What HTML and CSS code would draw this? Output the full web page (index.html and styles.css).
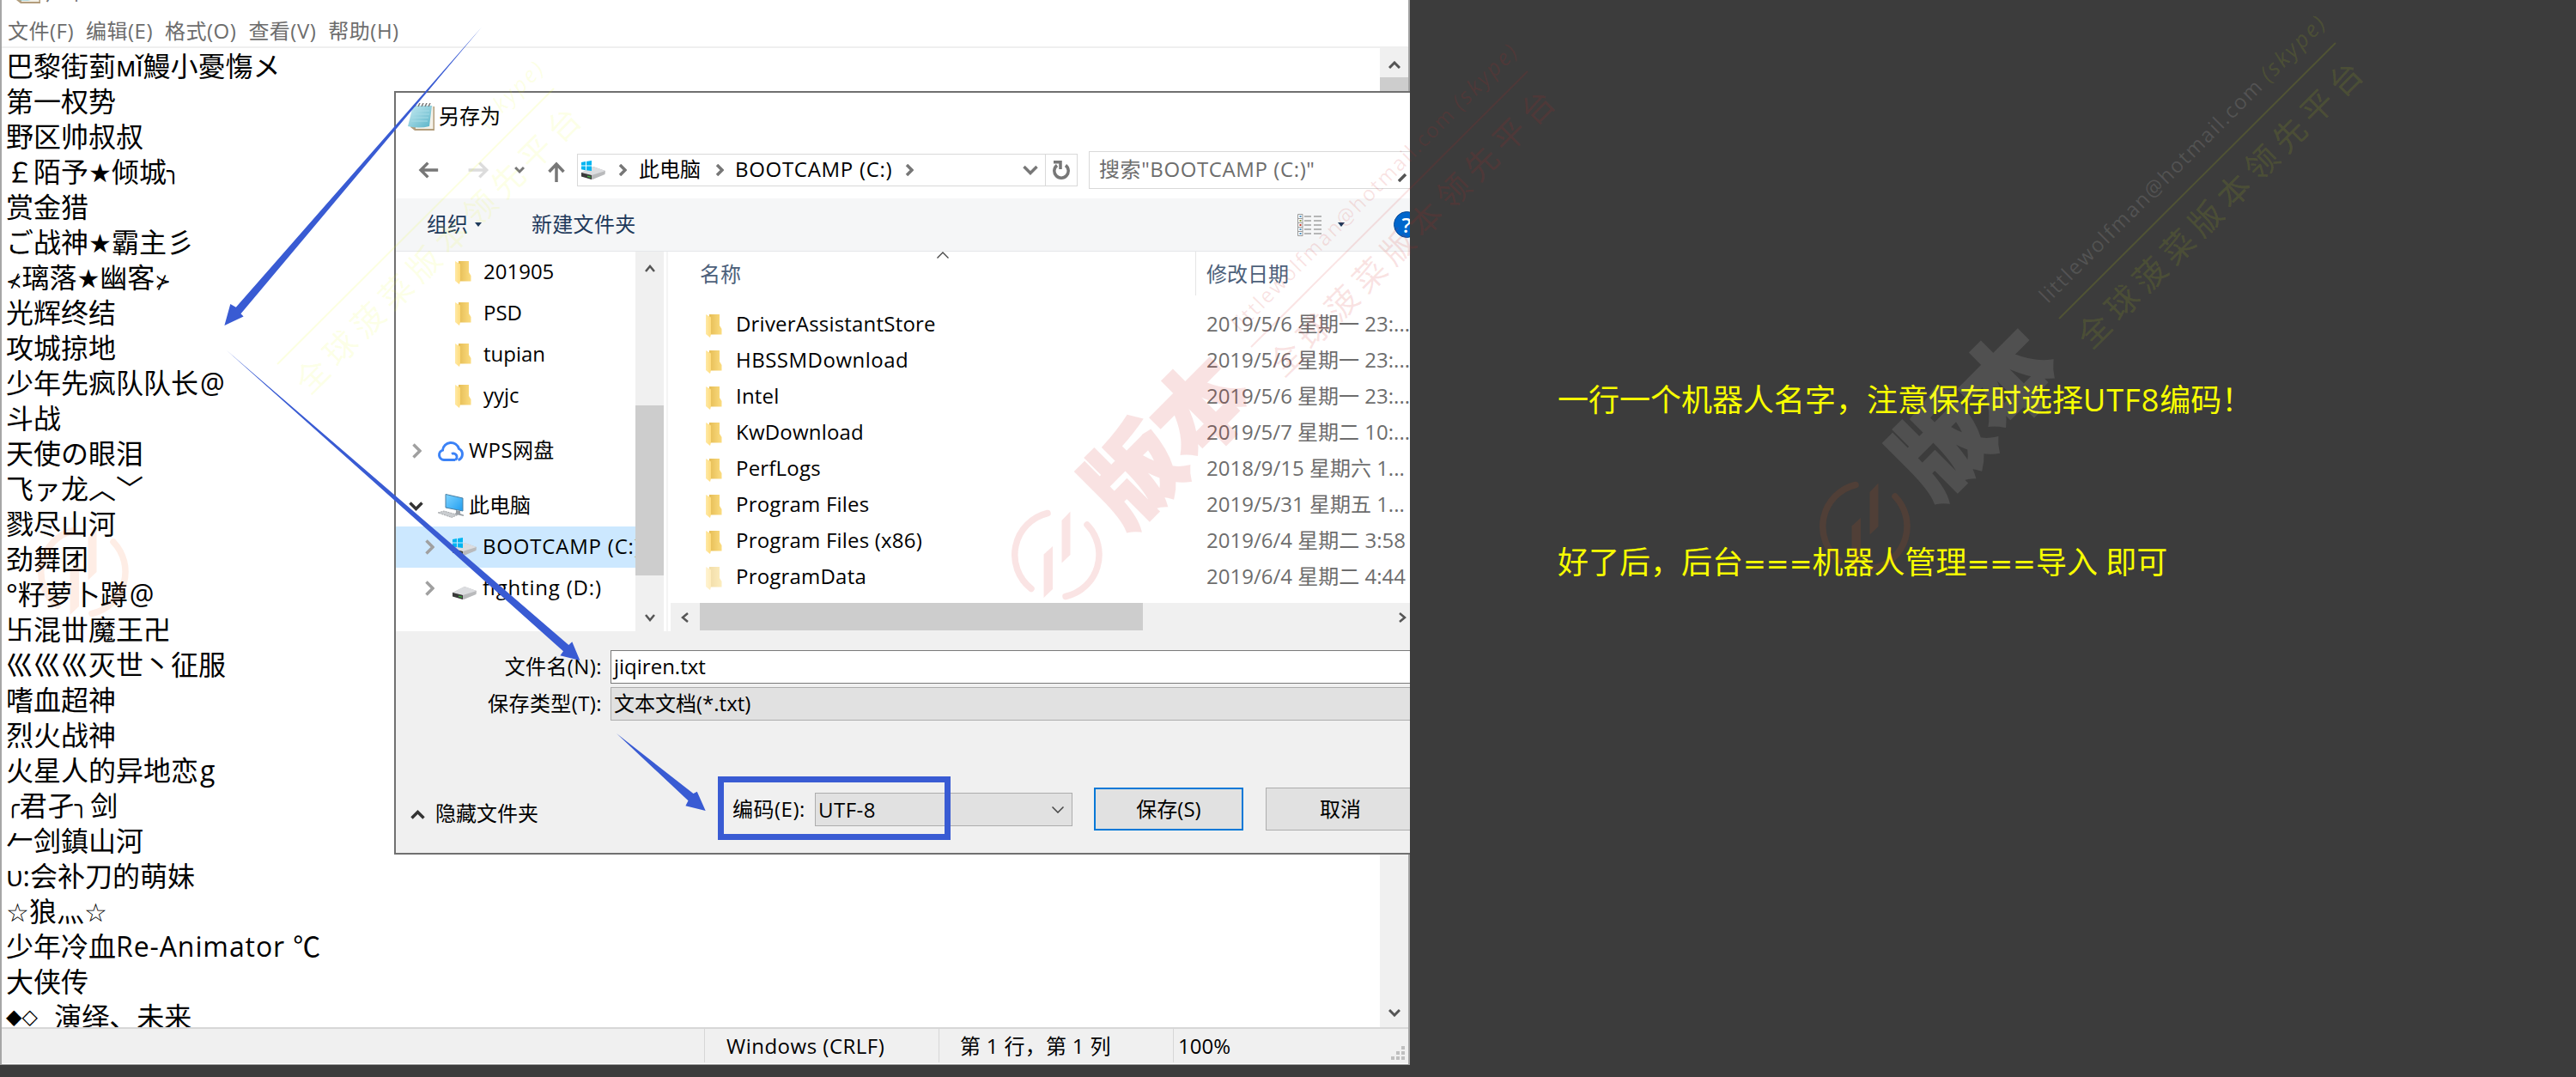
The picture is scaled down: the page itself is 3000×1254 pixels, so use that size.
FILE: index.html
```html
<!DOCTYPE html>
<html lang="zh-CN">
<head>
<meta charset="utf-8">
<title>记事本 - 另存为</title>
<link rel="stylesheet" href="styles.css">
</head>
<body>
<svg class="defs" width="0" height="0">
  <defs>
    <linearGradient id="fg" x1="0" x2="1"><stop offset="0" stop-color="#ffe9a6"/><stop offset="1" stop-color="#ffdc7c"/></linearGradient>
    <linearGradient id="fb" x1="0" x2="1"><stop offset="0" stop-color="#e6bd55"/><stop offset="1" stop-color="#fbdc80"/></linearGradient>
    <linearGradient id="np" x1="0" y1="0" x2="1" y2="1"><stop offset="0" stop-color="#c9ecf2"/><stop offset="1" stop-color="#58b3c8"/></linearGradient>
    <linearGradient id="pc" x1="0" y1="0" x2="1" y2="1"><stop offset="0" stop-color="#7fd4ff"/><stop offset="1" stop-color="#1f9df0"/></linearGradient>
    <symbol id="folder" viewBox="0 0 19 27"><path d="M4 0H16V13L18.5 17V23.5H4Z" fill="url(#fb)"/><path d="M0 0L6 3.5V23L5 27L0 23Z" fill="url(#fg)"/></symbol>
    <symbol id="drive" viewBox="0 0 28 15"><path d="M0 7L14 0L28 5L27.5 9L13 15L0 11Z" fill="#b9babc"/><path d="M0 7L14 0L28 5L12 10Z" fill="#dcdde0"/><path d="M0 7L12 10V15L0 11.5Z" fill="#3a3a3a"/><path d="M7 10.5L11 11.5V13L7 12Z" fill="#3fae3f"/></symbol>
    <symbol id="win" viewBox="0 0 12 12"><path d="M0 2L5 1V5.6H0ZM6 .9L12 0V5.6H6ZM0 6.6H5V11.2L0 10.3ZM6 6.6H12V12L6 11.2Z" fill="#00b5f1"/></symbol>
    <symbol id="notepad" viewBox="0 0 32 32"><path d="M8 4H31V32H8L3 28Z" fill="#b39d7c"/><path d="M7 3H29.500V30H9Z" fill="#f4f1e8"/><path d="M6 3H28L25 27Q13 30 0 27Z" fill="url(#np)"/><path d="M7 9H25M6 13H25M5 17H24M4 21H23" stroke="#a5dbe6" stroke-width="1"/><path d="M8 4L10 0M12 4L14 0M16 4L18 0M20 4L22 0M24 4L26 0" stroke="#777" stroke-width="1.500"/></symbol>
    <symbol id="mark" viewBox="-55 -55 110 110"><path d="M-11 -48.500A50 50 0 0 0 -30 39.500M35 -35A50 50 0 0 1 10 48.500" fill="none" stroke="currentColor" stroke-width="7.500" stroke-linecap="round"/><path d="M5.500-40L15.500-50.500V0L5.500 9.500ZM-15.500-.5L-5-10V40L-15.500 50Z" fill="currentColor"/></symbol>
  </defs>
</svg>

<main class="stage">
  <section class="notepad">
    <div class="np-title"><svg class="np-icon" width="32" height="32"><use href="#notepad"/></svg><span>户个</span></div>
    <nav class="menu"><span>文件(F)</span><span>编辑(E)</span><span>格式(O)</span><span>查看(V)</span><span>帮助(H)</span></nav>
    <div class="np-main">
      <div class="names">
        <p>巴黎街菿мǐ鰻小憂慯メ</p><p>第一权势</p><p>野区帅叔叔</p><p>￡陌予<i>★</i>倾城<b>╮</b></p><p>赏金猎</p><p>ご战神<i>★</i>霸主彡</p><p><u>⊀</u>璃落<i>★</i>幽客<u>⊁</u></p><p>光辉终结</p><p>攻城掠地</p><p>少年先疯队队长<em>@</em></p><p>斗战</p><p>天使の眼泪</p><p>飞ァ龙︿﹀</p><p>戮尽山河</p><p>劲舞团</p><p>°籽萝卜蹲<em>@</em></p><p>卐混丗魔王卍</p><p>巛巛巛灭世丶征服</p><p>嗜血超神</p><p>烈火战神</p><p>火星人的异地恋<em>g</em></p><p><b>╭</b>君孑<b>╮</b>剑</p><p>𠂉剑鎮山河</p><p>υ:会补刀的萌妹</p><p><i>☆</i>狼灬<i>☆</i></p><p>少年冷血<span class="wide">Re-Animator ℃</span></p><p>大侠传</p><p><s>◆◇</s> 演绎、未来</p>
      </div>
      <div class="np-scroll">
        <svg width="14" height="9" viewBox="0 0 14 9"><path d="M1 8L7 2L13 8" fill="none" stroke="#555" stroke-width="3"/></svg>
        <div class="np-thumb"></div>
        <svg class="end" width="14" height="9" viewBox="0 0 14 9"><path d="M1 1L7 7L13 1" fill="none" stroke="#555" stroke-width="3"/></svg>
      </div>
    </div>
    <footer class="status"><span class="s0"></span><span class="s1">Windows (CRLF)</span><span class="s2">第 1 行，第 1 列</span><span class="s3">100%</span>
      <svg class="grip" width="16" height="16" viewBox="0 0 16 16" fill="#bfbfbf"><path d="M12 0h4v4h-4zM12 6h4v4h-4zM6 6h4v4H6zM12 12h4v4h-4zM6 12h4v4H6zM0 12h4v4H0z"/></svg>
    </footer>
  </section>

  <section class="dialog">
    <header class="d-title"><svg width="32" height="32"><use href="#notepad"/></svg><span>另存为</span></header>
    <div class="navbar">
      <svg class="arrows" width="180" height="40" viewBox="0 0 180 40" fill="none" stroke-width="3.500"><path d="M50 20H30M38 11.500L29.500 20L38 28.500" stroke="#777"/><path d="M86 20H107M99 11.500L107.500 20L99 28.500" stroke="#dcdcdc"/><path d="M140 17L145 22L150 17" transform="translate(1.500 0)" stroke="#777" stroke-width="3"/></svg>
      <svg class="up" width="20" height="24" viewBox="0 0 20 24" fill="none" stroke="#777" stroke-width="3.500"><path d="M10 24V3M1.500 12L10 3L18.500 12"/></svg>
      <div class="address">
        <svg class="adrive" width="30" height="22" viewBox="0 0 30 22"><use href="#drive" x="1" y="7" width="28" height="15"/><use href="#win" x="1" y="0" width="12" height="12"/></svg>
        <svg class="chev" width="10" height="14" viewBox="0 0 10 14"><path d="M2 1L8 7L2 13"/></svg>
        <span class="c1">此电脑</span>
        <svg class="chev" width="10" height="14" viewBox="0 0 10 14"><path d="M2 1L8 7L2 13"/></svg>
        <span class="c2">BOOTCAMP (C:)</span>
        <svg class="chev" width="10" height="14" viewBox="0 0 10 14"><path d="M2 1L8 7L2 13"/></svg>
        <svg class="drop" width="18" height="12" viewBox="0 0 18 12"><path d="M1.500 2L9 9.500L16.500 2" fill="none" stroke="#777" stroke-width="3.500"/></svg>
        <div class="refresh"><svg width="20" height="22" viewBox="0 0 20 22"><path d="M15 5.500A8.200 8.200 0 1 1 5 5.500" fill="none" stroke="#777" stroke-width="3.500"/><path d="M1 1.800H9V10" fill="none" stroke="#777" stroke-width="3.500"/></svg></div>
      </div>
      <div class="search"><span>搜索"BOOTCAMP (C:)"</span><svg width="14" height="14" viewBox="0 0 14 14"><path d="M1 13L9 5" stroke="#555" stroke-width="3.500"/></svg></div>
    </div>
    <div class="toolbar"><span>组织</span><i class="caret"></i><span class="newf">新建文件夹</span>
      <svg class="view" width="28" height="26" viewBox="0 0 28 26"><path d="M.5.5H6V25.500H.5ZM.5 5.500H6M.5 10.500H6M.5 15.500H6M.5 20.500H6" fill="#fff" stroke="#999"/><path d="M8 3H16M19 3H28M8 8H16M19 8H28M8 13H16M19 13H28M8 18H16M19 18H28M8 23H16M19 23H28" stroke="#777" stroke-width="1.200"/><path d="M2.500 2h2v2h-2zM2.500 17h2v2h-2zM2.500 22h2v2h-2z" fill="#4a90c0"/><path d="M2.500 7h2v2h-2z" fill="#8a9a40"/><path d="M2.500 12h2v2h-2z" fill="#c03020"/></svg>
      <i class="caret"></i><div class="help">?</div>
    </div>
    <div class="panes">
      <aside class="tree">
        <div class="t f"><svg width="19" height="27"><use href="#folder"/></svg><span>201905</span></div>
        <div class="t f"><svg width="19" height="27"><use href="#folder"/></svg><span>PSD</span></div>
        <div class="t f"><svg width="19" height="27"><use href="#folder"/></svg><span>tupian</span></div>
        <div class="t f"><svg width="19" height="27"><use href="#folder"/></svg><span>yyjc</span></div>
        <div class="t top wps"><svg class="tc" width="11" height="18" viewBox="0 0 11 18"><path d="M1.500 1.500L9 9L1.500 16.500"/></svg><svg class="ti" width="32" height="25" viewBox="0 0 32 25" fill="none" stroke="#3b82f6" stroke-width="3"><path d="M21 22.500H8A5.800 5.800 0 0 1 6.500 11.200A9.700 9.700 0 0 1 25.500 9.500A7 7 0 0 1 24.500 22.500"/><path d="M17 15.500A4 4 0 0 1 21 22.500"/></svg><span>WPS网盘</span></div>
        <div class="t top"><svg class="tc open" width="17" height="11" viewBox="0 0 17 11"><path d="M1.500 1.500L8.500 8.500L15.500 1.500"/></svg><svg class="ti" width="32" height="28" viewBox="0 0 32 28"><path d="M10 .5L30 5V20L10 16Z" fill="url(#pc)" stroke="#4a7fa3"/><path d="M22 19L27 20V23L31 24.500V26L20 23.500L22 22Z" fill="#9aa0a6"/><path d="M1 22L8 20L24 24.500L17 27.500Z" fill="#c9cccf" stroke="#a5a8ab" stroke-dasharray="2 1"/></svg><span>此电脑</span></div>
        <div class="t sub sel"><svg class="tc" width="11" height="18" viewBox="0 0 11 18"><path d="M1.500 1.500L9 9L1.500 16.500"/></svg><svg class="ti" width="30" height="22" viewBox="0 0 30 22"><use href="#drive" x="1" y="6" width="28" height="15"/><use href="#win" x="1" y="0" width="12" height="12"/></svg><span class="boot">BOOTCAMP (C:)</span></div>
        <div class="t sub"><svg class="tc" width="11" height="18" viewBox="0 0 11 18"><path d="M1.500 1.500L9 9L1.500 16.500"/></svg><svg class="ti" width="30" height="26" viewBox="0 0 30 26"><use href="#drive" x="1" y="11" width="28" height="15" /></svg><span class="boot">fighting (D:)</span></div>
      </aside>
      <div class="tscroll"><svg width="12" height="9" viewBox="0 0 12 9"><path d="M1 8L6 2L11 8" fill="none" stroke="#555" stroke-width="2.500"/></svg><div class="tthumb"></div><svg class="end" width="12" height="9" viewBox="0 0 12 9"><path d="M1 1L6 7L11 1" fill="none" stroke="#555" stroke-width="2.500"/></svg></div>
      <div class="files">
        <div class="fhead"><span class="hn">名称</span><svg width="14" height="8" viewBox="0 0 14 8"><path d="M.5 7.500L7 1L13.500 7.500" fill="none" stroke="#444" stroke-width="1.300"/></svg><span class="hd">修改日期</span></div>
        <div class="frow"><svg width="19" height="27"><use href="#folder"/></svg><span class="fn">DriverAssistantStore</span><span class="fd">2019/5/6 星期一 23:...</span></div>
        <div class="frow"><svg width="19" height="27"><use href="#folder"/></svg><span class="fn loose">HBSSMDownload</span><span class="fd">2019/5/6 星期一 23:...</span></div>
        <div class="frow"><svg width="19" height="27"><use href="#folder"/></svg><span class="fn">Intel</span><span class="fd">2019/5/6 星期一 23:...</span></div>
        <div class="frow"><svg width="19" height="27"><use href="#folder"/></svg><span class="fn">KwDownload</span><span class="fd">2019/5/7 星期二 10:...</span></div>
        <div class="frow"><svg width="19" height="27"><use href="#folder"/></svg><span class="fn">PerfLogs</span><span class="fd">2018/9/15 星期六 1...</span></div>
        <div class="frow"><svg width="19" height="27"><use href="#folder"/></svg><span class="fn">Program Files</span><span class="fd">2019/5/31 星期五 1...</span></div>
        <div class="frow"><svg width="19" height="27"><use href="#folder"/></svg><span class="fn">Program Files (x86)</span><span class="fd">2019/6/4 星期二 3:58</span></div>
        <div class="frow dim"><svg width="19" height="27"><use href="#folder"/></svg><span class="fn">ProgramData</span><span class="fd">2019/6/4 星期二 4:44</span></div>
        <div class="hscroll"><svg width="9" height="12" viewBox="0 0 9 12"><path d="M8 1L2 6L8 11" fill="none" stroke="#555" stroke-width="2.500"/></svg><div class="hthumb"></div><svg class="end" width="9" height="12" viewBox="0 0 9 12"><path d="M1 1L7 6L1 11" fill="none" stroke="#555" stroke-width="2.500"/></svg></div>
      </div>
    </div>
    <div class="form">
      <label>文件名(N):</label><div class="input">jiqiren.txt</div>
      <label>保存类型(T):</label><div class="combo">文本文档(*.txt)</div>
    </div>
    <div class="actions">
      <svg class="hidec" width="17" height="11" viewBox="0 0 17 11"><path d="M1.500 9.500L8.500 2.500L15.500 9.500" fill="none" stroke="#333" stroke-width="3.500"/></svg><span class="hide">隐藏文件夹</span>
      <span class="enc">编码(E):</span>
      <div class="combo enc-combo"><span>UTF-8</span><svg width="14" height="8" viewBox="0 0 14 8"><path d="M.5.5L7 7L13.500.5" fill="none" stroke="#444" stroke-width="1.500"/></svg></div>
      <div class="btn save">保存(S)</div><div class="btn cancel">取消</div>
    </div>
  </section>

  <section class="notes"><p>一行一个机器人名字，注意保存时选择<span class="utf">UTF8</span>编码！</p><p>好了后，后台<span class="eq">===</span>机器人管理<span class="eq">===</span>导入 即可</p></section>

  <svg class="overlay" width="3000" height="1254" viewBox="0 0 3000 1254">
    <g class="arrow"><path d="M560.600 32L274.800 357.700L268.300 354L261.400 379L283.600 368.500L280.500 365.300Z"/><path d="M264 408L662.300 751L666.300 747.300L675.400 769L652.400 763.300L656 758.300Z"/><path d="M718 854L807.500 924L811.800 921.700L821.700 944L798.400 938.300L801.500 932.300Z"/></g>
    <rect class="frame" x="839.500" y="907.500" width="264" height="67"/>
    <g class="wm dark">
      <use class="logo" href="#mark" x="2117" y="558" width="110" height="110"/>
      <g transform="translate(2261 590) rotate(-45)"><text class="big" x="-4" y="-9" textLength="218" lengthAdjust="spacingAndGlyphs">版本</text></g>
      <g transform="translate(2385 354) rotate(-45)"><text class="mail" x="0" y="0" textLength="355">littlewolfman@hotmail.com</text><text class="skype" x="364" y="0" textLength="95">(skype)</text></g>
      <path class="rule" d="M2398 371L2720 50"/>
      <g transform="translate(2590 239) rotate(-45)"><text class="slogan" x="-229" y="10" textLength="452">全球菠菜版本领先平台</text></g>
    </g>
    <g class="wm red" transform="translate(-941 33)">
      <use class="logo" href="#mark" x="2117" y="558" width="110" height="110"/>
      <g transform="translate(2261 590) rotate(-45)"><text class="big" x="-4" y="-9" textLength="218" lengthAdjust="spacingAndGlyphs">版本</text></g>
      <g transform="translate(2385 354) rotate(-45)"><text class="mail" x="0" y="0" textLength="355">littlewolfman@hotmail.com</text><text class="skype" x="364" y="0" textLength="95">(skype)</text></g>
      <path class="rule" d="M2398 371L2720 50"/>
      <g transform="translate(2590 239) rotate(-45)"><text class="slogan" x="-229" y="10" textLength="452">全球菠菜版本领先平台</text></g>
    </g>
    <g class="wm dark" transform="translate(-2075 53)">
      <use class="logo" href="#mark" x="2117" y="558" width="110" height="110"/>
      <g transform="translate(2385 354) rotate(-45)"><text class="skype" x="364" y="0" textLength="95">(skype)</text></g>
      <path class="rule" d="M2398 371L2720 50"/>
      <g transform="translate(2590 239) rotate(-45)"><text class="slogan" x="-229" y="10" textLength="452">全球菠菜版本领先平台</text></g>
    </g>
  </svg>
</main>
</body>
</html>
```
FILE: styles.css
```css
* { box-sizing: border-box; }
body { margin: 0; background: #3c3c3c; font-family: "Open Sans", "Noto Sans CJK SC", sans-serif; font-size: 24px; line-height: 1; color: #000; }
p { margin: 0; }
span, label { white-space: pre; }
.defs { position: absolute; }
svg { flex: none; display: block; }
.stage { position: relative; width: 3000px; height: 1254px; overflow: hidden; display: flex; }

.notepad { width: 1642px; height: 1240px; background: #fff; border-left: 2px solid #a6a6a6; border-right: 2px solid #a6a6a6; border-bottom: 1px solid #a0a0a0; display: flex; flex-direction: column; overflow: hidden; flex: none; }
.np-title { height: 17px; flex: none; padding-left: 14px; display: flex; gap: 5px; align-items: flex-start; }
.np-icon { margin-top: -28px; }
.np-title span { margin-top: -21px; color: #777; }
.menu { height: 39px; flex: none; border-bottom: 2px solid #efefef; padding-left: 7px; display: flex; gap: 14px; line-height: 37px; color: #6d6d6d; letter-spacing: .5px; }
.np-main { height: 1140px; flex: none; display: flex; overflow: hidden; }
.names { flex: 1; font-size: 32px; padding-left: 5px; }
.names p { height: 41px; line-height: 41px; white-space: pre; }
.names i, .names b, .names u, .names s { font: 30px "DejaVu Sans"; text-decoration: none; }
.names b { font-size: 26px; line-height: 20px; vertical-align: 4px; }
.names p b:last-of-type { margin-right: 3px; }
.names u { font-size: 22px; }
.names s { font-size: 24px; line-height: 20px; vertical-align: 4px; margin-right: 11px; }
.names em { font-style: normal; margin-left: 2px; }
.wide { letter-spacing: .9px; }
.np-scroll { width: 33px; background: #f0f0f0; display: flex; flex-direction: column; align-items: center; padding: 15px 0 12px; }
.np-thumb { width: 33px; height: 400px; background: #cdcdcd; margin-top: 10px; }
.end { margin-top: auto; margin-left: 0; }
.status { height: 43px; background: #f0f0f0; border-top: 2px solid #d7d7d7; border-bottom: 1px solid #fff; display: flex; line-height: 39px; position: relative; }
.status span { border-left: 1px solid #d7d7d7; margin-bottom: 1px; }
.status .s0 { width: 818px; border: 0; }
.s1 { width: 273px; padding-left: 25px; letter-spacing: .5px; }
.s2 { width: 273px; padding-left: 24px; letter-spacing: .3px; }
.s3 { flex: 1; padding-left: 5px; }
.grip { align-self: flex-end; margin: 0 4px 4px 0; }

.dialog { position: absolute; left: 459px; top: 106px; width: 1183px; height: 889px; border: 2px solid #707070; border-right: 0; background: #fff; overflow: hidden; display: flex; flex-direction: column; }
.d-title { height: 56px; flex: none; padding: 0 0 0 14px; display: flex; gap: 4px; align-items: center; }
.d-title span { padding-bottom: 3px; }
.navbar { height: 67px; flex: none; display: flex; align-items: center; padding-top: 1px; }
.arrows { width: 177px; }
.up { width: 20px; margin-top: 3px; margin-right: 14px; }
.address { width: 583px; height: 38px; border: 1px solid #d9d9d9; display: flex; align-items: center; flex: none; }
.adrive { margin: 0 12px 0 3px; }
.chev { fill: none; stroke: #777; stroke-width: 3.500; margin-left: 2px; }
.c1 { width: 87px; margin-left: 14px; padding-bottom: 2px; }
.c2 { width: 196px; margin-left: 13px; letter-spacing: .7px; padding-bottom: 2px; }
.drop { margin-left: auto; }
.refresh { width: 37px; height: 36px; border-left: 1px solid #d9d9d9; margin-left: 8px; display: flex; align-items: center; justify-content: center; }
.search { margin-left: 13px; flex: 1; height: 44px; border: 1px solid #d9d9d9; border-right: 0; color: #6d6d6d; display: flex; align-items: center; padding-left: 11px; overflow: hidden; }
.search span { width: 357px; letter-spacing: .6px; padding-bottom: 2px; }
.search svg { margin-top: 14px; }
.toolbar { height: 62px; flex: none; background: #f5f6f7; border-bottom: 1px solid #e5e7ea; display: flex; align-items: center; padding-left: 36px; color: #1e395b; }
.toolbar span { padding-bottom: 2px; }
.caret { width: 0; height: 0; border: 4px solid transparent; border-top: 5px solid #1e395b; border-bottom: 0; margin-left: 8px; }
.newf { margin-left: 58px; letter-spacing: .3px; }
.view { margin-left: 770px; }
.view + .caret { margin-left: 19px; }
.help { width: 31px; height: 31px; border-radius: 50%; background: #0066cc; border: 1px solid #0a4a94; color: #fff; margin-left: 57px; flex: none; display: flex; align-items: center; justify-content: center; font-weight: 600; }
.panes { height: 442px; flex: none; display: flex; }
.tree { width: 279px; overflow: hidden; }
.t { height: 48px; display: flex; align-items: center; }
.t span { padding-bottom: 2px; }
.f { padding-left: 69px; gap: 14px; }
.top { padding-left: 19px; }
.wps { margin: 16px 0; }
.wps span { letter-spacing: .4px; }
.sub { padding-left: 34px; }
.boot { letter-spacing: .8px; }
.tc { fill: none; stroke: #a0a0a0; stroke-width: 3.500; }
.top .ti { margin: 0 5px 0 18px; }
.top .open { stroke: #333; margin-left: -4px; }
.top .open + .ti { margin-left: 16px; }
.sub .ti { margin: 0 6px 0 20px; }
.sel { background: #cce8ff; }
.tscroll { width: 33px; background: #f0f0f0; display: flex; flex-direction: column; align-items: center; padding: 15px 0 11px; flex: none; }
.tthumb { width: 33px; height: 198px; background: #cdcdcd; margin-top: 155px; }
.files { flex: 1; border-left: 2px solid #f4f4f4; margin-left: 3px; display: flex; flex-direction: column; overflow: hidden; }
.fhead { height: 65px; flex: none; display: flex; align-items: flex-start; color: #4c607a; padding-left: 37px; }
.fhead span { line-height: 52px; }
.hn { width: 276px; }
.hd { height: 51px; border-left: 1px solid #e5e5e5; margin-left: 287px; padding-left: 12px; }
.frow { height: 42px; flex: none; display: flex; align-items: center; padding-left: 44px; }
.frow span { padding-bottom: 4px; }
.fn { width: 548px; margin-left: 16px; letter-spacing: .2px; }
.loose { letter-spacing: .5px; }
.fd { color: #6d6d6d; }
.dim svg { opacity: .5; }
.hscroll { height: 33px; margin: 8px 0 0 3px; background: #f0f0f0; display: flex; align-items: center; padding: 0 4px 0 12px; flex: none; }
.hthumb { width: 516px; height: 32px; background: #cdcdcd; margin-left: 13px; align-self: flex-start; }
.hscroll .end { margin: 0 0 0 auto; }
.form { background: #f0f0f0; height: 105px; flex: none; display: grid; grid-template-columns: 250px 1fr; grid-auto-rows: 39px; row-gap: 4px; padding-top: 22px; line-height: 38px; }
.form label { text-align: right; padding-right: 10px; letter-spacing: .4px; }
.input, .combo { border: 1px solid #7a7a7a; border-right: 0; background: #fff; padding-left: 3px; line-height: 35px; }
.combo { background: #e1e1e1; border-color: #adadad; }
.actions { flex: 1; background: #f0f0f0; display: flex; align-items: flex-start; padding: 77px 0 0 17px; line-height: 50px; }
.hidec { margin-top: 26px; }
.hide { margin: 5px 0 0 12px; width: 346px; flex: none; }
.enc { width: 96px; letter-spacing: .5px; flex: none; }
.enc-combo { width: 300px; height: 39px; margin: 6px 25px 0 0; border-right: 1px solid #adadad; display: flex; justify-content: space-between; align-items: center; padding-right: 9px; flex: none; letter-spacing: .5px; }
.btn { width: 174px; height: 50px; background: #e1e1e1; border: 2px solid #0078d7; text-align: center; line-height: 45px; flex: none; }
.cancel { border: 1px solid #adadad; margin-left: 26px; line-height: 47px; }

.notes { position: relative; flex: 1; padding: 448px 0 0 172px; color: #f8ff00; font-size: 36px; }
.notes p { line-height: 36px; margin-bottom: 153px; white-space: pre; }
.utf { letter-spacing: 1px; }
.eq { font-family: "DejaVu Sans", sans-serif; font-size: 32px; line-height: 30px; }

.overlay { position: absolute; left: 0; top: 0; }
.arrow { fill: #395bd3; }
.frame { fill: none; stroke: #395bd3; stroke-width: 7; }
.wm .logo { color: rgb(250 90 20 / .11); }
.big { font: 900 110px "Noto Sans CJK SC", sans-serif; fill: #fff; stroke: #fff; stroke-width: 3; opacity: .1; }
.mail { font-size: 24px; fill: rgb(255 255 255 / .12); }
.skype { font-size: 26px; font-style: italic; fill: rgb(230 255 0 / .11); }
.slogan { font-size: 38px; fill: rgb(230 255 0 / .11); }
.rule { stroke: rgb(230 255 0 / .12); stroke-width: 2; }
.red .logo { color: rgb(210 30 30 / .12); }
.red text { fill: rgb(210 30 30 / .13); }
.red .big { fill: #d21e1e; stroke: #d21e1e; opacity: .12; }
.red .rule { stroke: rgb(210 30 30 / .12); }
```
